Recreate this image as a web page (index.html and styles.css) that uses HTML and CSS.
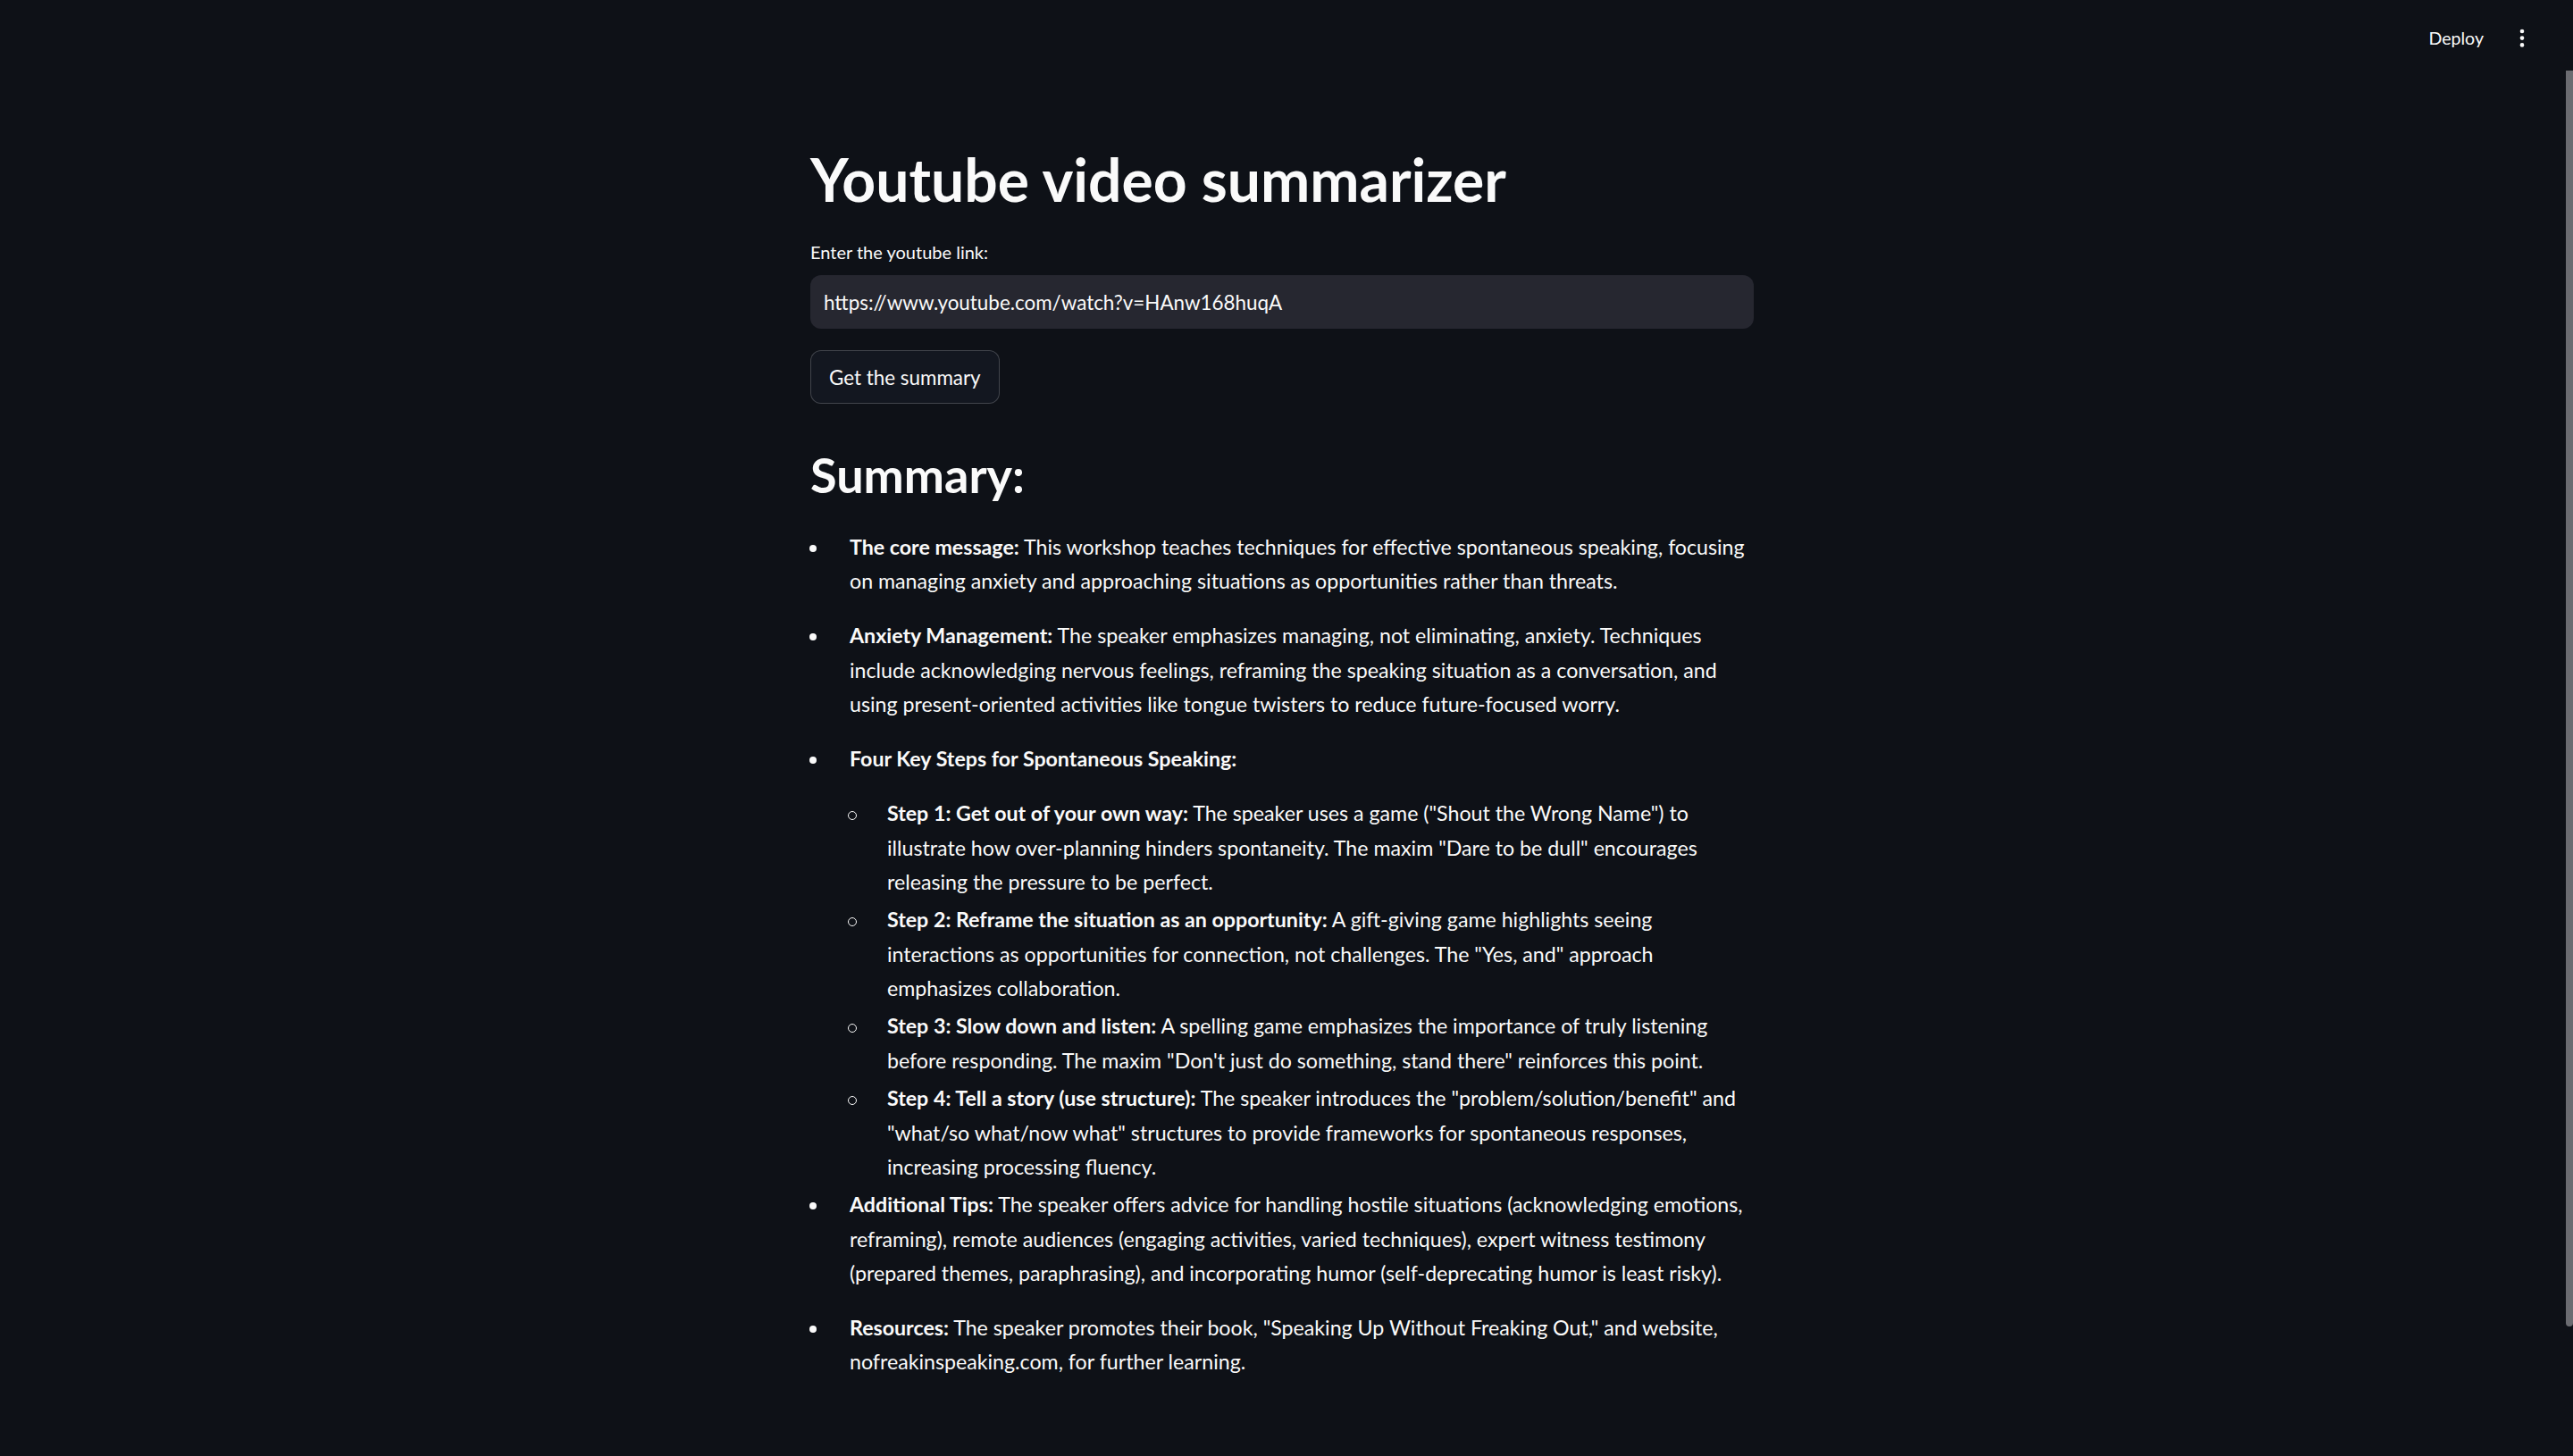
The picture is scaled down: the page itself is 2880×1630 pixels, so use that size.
FILE: index.html
```html
<!DOCTYPE html>
<html lang="en">
<head>
  <meta charset="UTF-8" />
  <title>Youtube video summarizer</title>
  <link rel="stylesheet" href="styles.css">
</head>
<body>
  <header class="toolbar">
    <span class="deploy">Deploy</span>
    <svg class="menu" width="10" height="26" viewBox="0 0 10 26">
      <circle cx="5" cy="5" r="2.3" fill="#fafafa"/>
      <circle cx="5" cy="12.6" r="2.3" fill="#fafafa"/>
      <circle cx="5" cy="20.4" r="2.3" fill="#fafafa"/>
    </svg>
  </header>

  <div class="app">
    <main class="block">
      <h1>Youtube video summarizer</h1>

      <label class="label" for="link">Enter the youtube link:</label>
      <input class="field" id="link" type="text" value="https://www.youtube.com/watch?v=HAnw168huqA" />

      <button class="btn">Get the summary</button>

      <h2>Summary:</h2>

      <ul class="summary">
        <li><p><strong>The core message:</strong> This workshop teaches techniques for effective spontaneous speaking, focusing on managing anxiety and approaching situations as opportunities rather than threats.</p></li>
        <li><p><strong>Anxiety Management:</strong> The speaker emphasizes managing, not eliminating, anxiety. Techniques include acknowledging nervous feelings, reframing the speaking situation as a conversation, and using present-oriented activities like tongue twisters to reduce future-focused worry.</p></li>
        <li class="has-sub">
          <p><strong>Four Key Steps for Spontaneous Speaking:</strong></p>
          <ul class="sub">
            <li><strong>Step 1: Get out of your own way:</strong> The speaker uses a game ("Shout the Wrong Name") to illustrate how over-planning hinders spontaneity. The maxim "Dare to be dull" encourages releasing the pressure to be perfect.</li>
            <li><strong>Step 2: Reframe the situation as an opportunity:</strong> A gift-giving game highlights seeing interactions as opportunities for connection, not challenges. The "Yes, and" approach emphasizes collaboration.</li>
            <li><strong>Step 3: Slow down and listen:</strong> A spelling game emphasizes the importance of truly listening before responding. The maxim "Don't just do something, stand there" reinforces this point.</li>
            <li><strong>Step 4: Tell a story (use structure):</strong> The speaker introduces the "problem/solution/benefit" and "what/so what/now what" structures to provide frameworks for spontaneous responses, increasing processing fluency.</li>
          </ul>
        </li>
        <li><p><strong>Additional Tips:</strong> The speaker offers advice for handling hostile situations (acknowledging emotions, reframing), remote audiences (engaging activities, varied techniques), expert witness testimony (prepared themes, paraphrasing), and incorporating humor (self-deprecating humor is least risky).</p></li>
        <li><p><strong>Resources:</strong> The speaker promotes their book, "Speaking Up Without Freaking Out," and website, nofreakinspeaking.com, for further learning.</p></li>
      </ul>
    </main>
  </div>

  <div class="scroll-thumb"></div>
</body>
</html>
```

FILE: styles.css
```css
* {
  box-sizing: border-box;
}

body {
  margin: 0;
  background: #0e1117;
  color: #fafafa;
  font-family: 'Lato', 'Liberation Sans', sans-serif;
  min-height: 100vh;
}

.toolbar {
  display: flex;
  justify-content: flex-end;
  align-items: center;
  height: 86px;
  padding: 0 52px 0 0;
  gap: 38px;
}

.deploy {
  font-size: 19.6px;
  line-height: 30px;
}

.menu {
  display: block;
}

.app {
  padding-right: 10px;
}

.block {
  width: 1056px;
  margin: 0 auto;
  padding-top: 75px;
  padding-bottom: 80px;
}

h1 {
  font-size: 66px;
  line-height: 79px;
  font-weight: 700;
  margin: 0 0 27px;
}

.label {
  display: block;
  font-size: 20px;
  line-height: 30px;
  margin-bottom: 11px;
}

.field {
  display: block;
  width: 100%;
  height: 60px;
  border: none;
  border-radius: 12px;
  background: #262730;
  color: #fafafa;
  font-family: inherit;
  font-size: 22.4px;
  padding: 0 15px;
  outline: none;
  margin-bottom: 24px;
}

.btn {
  display: block;
  height: 60px;
  padding: 0 20px;
  border: 1.5px solid rgba(250, 250, 250, 0.2);
  border-radius: 12px;
  background: #131720;
  color: #fafafa;
  font-family: inherit;
  font-size: 22.4px;
  margin-bottom: 47px;
}

h2 {
  font-size: 54px;
  line-height: 65px;
  font-weight: 700;
  margin: 0 0 29px;
}

.summary, .sub {
  list-style: none;
  margin: 0;
  padding: 0;
  font-size: 23.2px;
  line-height: 38.4px;
}

.summary > li {
  position: relative;
  padding-left: 44px;
  margin-bottom: 22.6px;
}

.summary > li.has-sub {
  margin-bottom: 3.9px;
}

.summary p {
  margin: 0;
}

.summary > li::before {
  content: "";
  position: absolute;
  left: -1px;
  top: 17px;
  width: 8px;
  height: 8px;
  border-radius: 50%;
  background: #fafafa;
}

.sub {
  margin-top: 22.6px;
}

.sub > li {
  position: relative;
  padding-left: 42px;
  margin-bottom: 3.9px;
}

.sub > li::before {
  content: "";
  position: absolute;
  left: -2px;
  top: 17px;
  width: 8px;
  height: 8px;
  border-radius: 50%;
  border: 1.5px solid #fafafa;
}

strong {
  font-weight: 700;
}

.scroll-thumb {
  position: fixed;
  top: 79px;
  right: 0;
  width: 8px;
  height: 1406px;
  background: #6b6c71;
  border-radius: 0 0 4px 4px;
}
```
